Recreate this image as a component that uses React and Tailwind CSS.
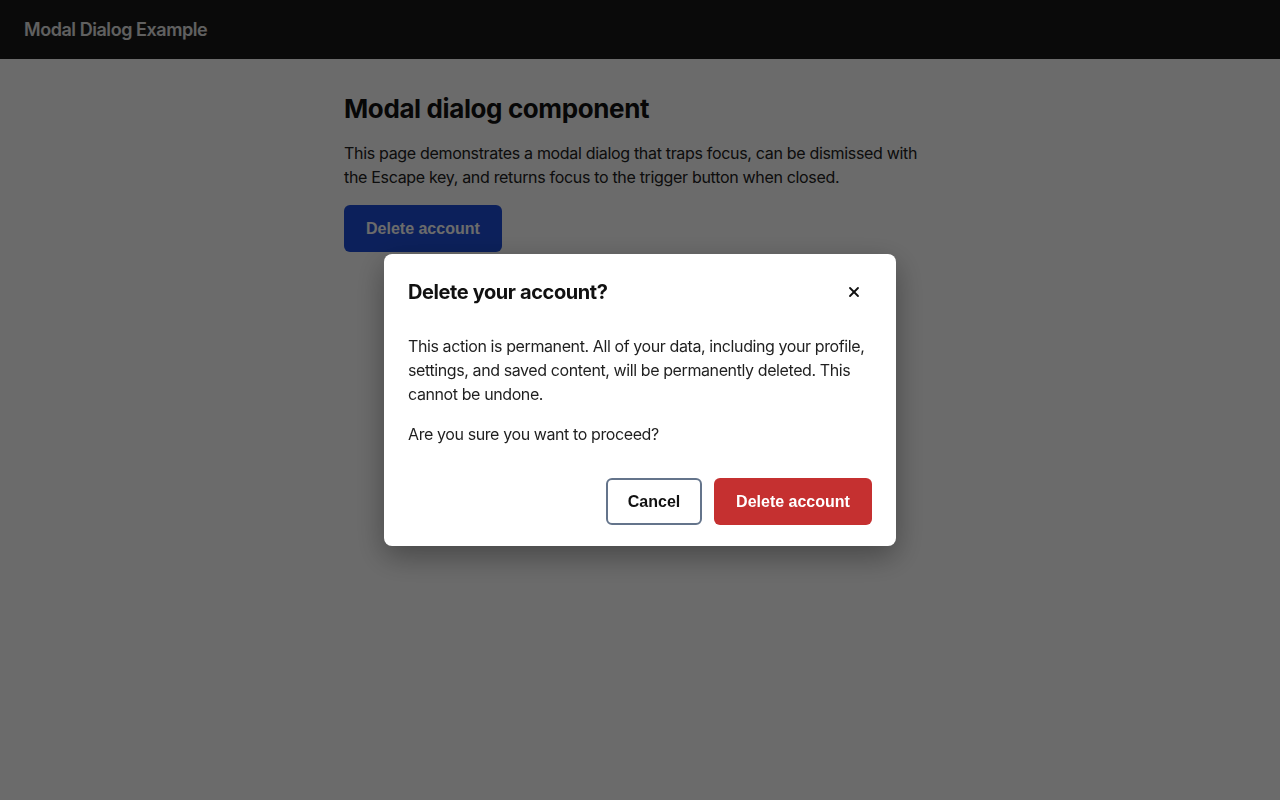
import { X } from 'lucide-react'

export default function App() {
  return (
    <div className="min-h-screen bg-white font-['Inter',sans-serif] text-[#111]">
      <header className="h-[59px] bg-[#1a1a1a] flex items-center px-6">
        <span className="text-[#e5e5e5] font-semibold text-lg tracking-[-0.025em]">Modal Dialog Example</span>
      </header>

      <main className="w-[592px] mx-auto pt-[33px]">
        <h1 className="text-[26px] leading-[34px] font-bold tracking-[-0.015em]">Modal dialog component</h1>
        <p className="mt-[15px] text-base leading-6 text-[#222] tracking-[-0.02em]">
          This page demonstrates a modal dialog that traps focus, can be dismissed with the Escape key, and returns focus to the trigger button when closed.
        </p>
        <button
          type="button"
          className="mt-4 h-[47px] px-[22px] rounded-md bg-[#1d4ed8] text-white font-bold text-base font-['Liberation_Sans',Arial,sans-serif]"
        >
          Delete account
        </button>
      </main>

      <div className="fixed inset-0 bg-black/[0.58] flex items-center justify-center">
        <div
          role="dialog"
          aria-modal="true"
          className="w-[512px] bg-white rounded-lg shadow-[0_10px_30px_rgba(0,0,0,0.35)] px-6 pt-6 pb-[21px]"
        >
          <div className="flex items-center justify-between h-7">
            <h2 className="text-[20px] font-bold tracking-[-0.02em] text-[#111]">Delete your account?</h2>
            <button type="button" className="w-8 h-8 mr-[2px] flex items-center justify-center text-[#111]" aria-label="Close">
              <X size={16} strokeWidth={2.75} />
            </button>
          </div>
          <div className="mt-7 text-base leading-6 text-[#1f1f1f] tracking-[-0.025em]">
            <p>This action is permanent. All of your data, including your profile, settings, and saved content, will be permanently deleted. This cannot be undone.</p>
            <p className="mt-4">Are you sure you want to proceed?</p>
          </div>
          <div className="mt-8 flex justify-end gap-3 font-['Liberation_Sans',Arial,sans-serif]">
            <button type="button" className="h-[47px] w-[96px] rounded-md border-2 border-[#64748b] bg-white text-[#111] font-bold text-base">
              Cancel
            </button>
            <button type="button" className="h-[47px] w-[158px] rounded-md bg-[#c53030] text-white font-bold text-base">
              Delete account
            </button>
          </div>
        </div>
      </div>
    </div>
  )
}
